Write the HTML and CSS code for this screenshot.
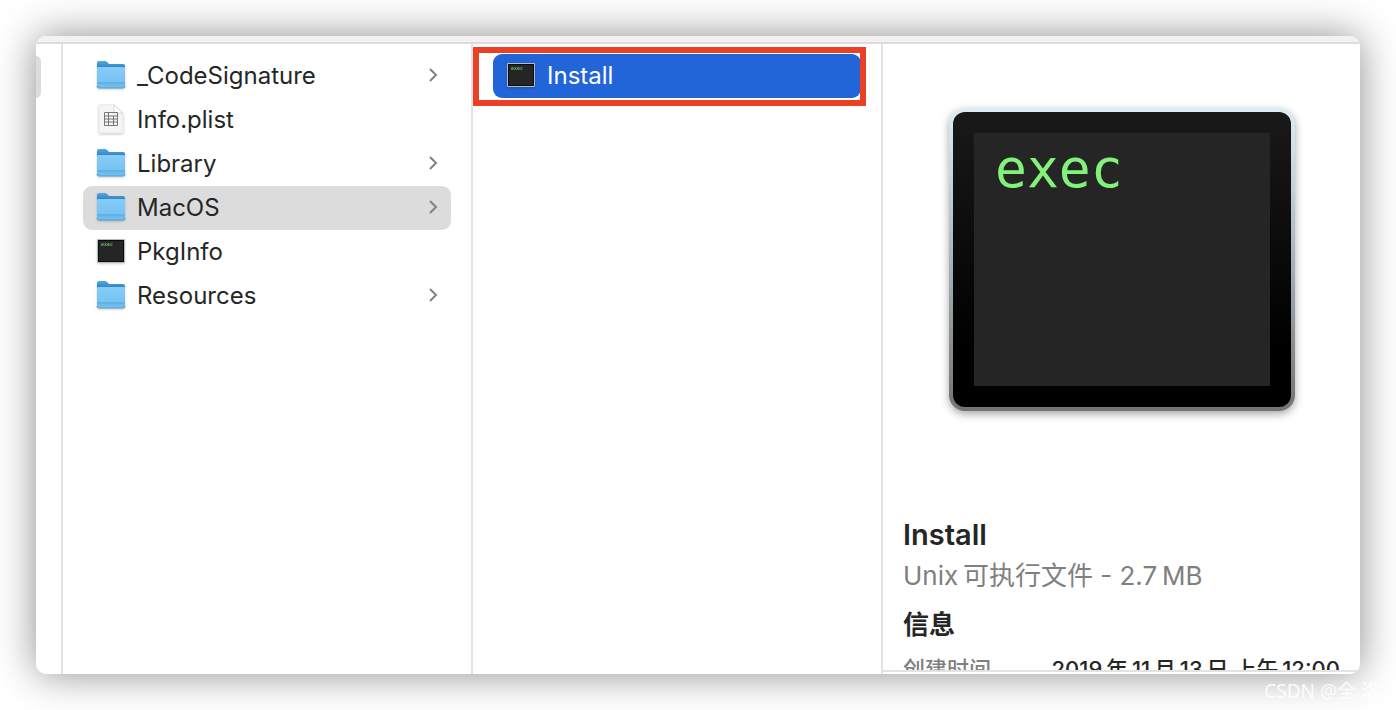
FILE: index.html
```
<!DOCTYPE html>
<html lang="zh-CN">
<head>
  <meta charset="UTF-8" />
  <meta name="viewport" content="width=device-width, initial-scale=1.0" />
  <title>MacOS</title>
  <link rel="stylesheet" href="styles.css">
</head>
<body>
  <svg class="defs" width="0" height="0" aria-hidden="true">
    <defs>
      <linearGradient id="folderBack" x1="0" y1="0" x2="0" y2="1">
        <stop offset="0" stop-color="#52a9df" />
        <stop offset="0.25" stop-color="#2f83c3" />
        <stop offset="1" stop-color="#4b9fd8" />
      </linearGradient>
      <linearGradient id="folderFront" x1="0" y1="0" x2="0" y2="1">
        <stop offset="0" stop-color="#85cdf9" />
        <stop offset="1" stop-color="#73bff0" />
      </linearGradient>
      <linearGradient id="rim" x1="0" y1="0" x2="0" y2="1">
        <stop offset="0" stop-color="#dcedf5" />
        <stop offset="0.3" stop-color="#bccdd5" />
        <stop offset="1" stop-color="#757272" />
      </linearGradient>
      <linearGradient id="bezel" x1="0" y1="0" x2="0" y2="1">
        <stop offset="0" stop-color="#191919" />
        <stop offset="0.8" stop-color="#000" />
      </linearGradient>
    </defs>
    <symbol id="folder" viewBox="0 0 30 30">
      <path d="M1 27V3q0-2 2-2h6q1 0 2 1l2 2h14q2 0 2 2v21z" fill="url(#folderBack)" />
      <path d="M1 8q0-1 1-1h26q1 0 1 1v18q0 2-2 2H3q-2 0-2-2z" fill="url(#folderFront)" />
      <path d="M1 23h28" stroke="#4ba4df" />
      <path d="M1 25h28" stroke="#61b4e8" stroke-width="1" />
      <path d="M1 26q0 2 2 2h24q2 0 2-2" fill="none" stroke="#579bc7" />
    </symbol>
    <symbol id="plist" viewBox="0 0 30 30">
      <path d="M4 1h14l9 9v18q0 1-1 1H4q-1 0-1-1V2q0-1 1-1z" fill="#f5f5f5" stroke="#e9e9e9" />
      <path d="M18 1v7q0 1 1 1h8z" fill="#fff" stroke="#d8d8d8" />
      <path d="M8.500 8.500h13v13h-13zM8.500 12h13M8.500 15h13M8.500 18h13M12.500 8.500v13M17.500 12v9" fill="none" stroke="#777" />
    </symbol>
    <symbol id="exec" viewBox="0 0 30 30">
      <rect x="1" y="3" width="28" height="24" rx="1" fill="#b3bdc1" />
      <rect x="2" y="4" width="26" height="22" fill="#0c0c0c" />
      <rect x="3" y="5" width="24" height="20" fill="#252525" />
      <text class="exec-small" x="5" y="10">exec</text>
    </symbol>
    <symbol id="chevron" viewBox="0 0 10 16">
      <path d="M2 2l6 6-6 6" fill="none" stroke="#828282" stroke-width="2" />
    </symbol>
  </svg>

  <main class="window">
    <div class="toolbar"></div>
    <div class="columns">
      <div class="column parent"><div class="parent-row"></div></div>

      <ul class="column">
        <li><button class="item"><svg class="icon"><use href="#folder" /></svg><span>_CodeSignature</span><svg class="chevron"><use href="#chevron" /></svg></button></li>
        <li><button class="item"><svg class="icon"><use href="#plist" /></svg><span>Info.plist</span></button></li>
        <li><button class="item"><svg class="icon"><use href="#folder" /></svg><span>Library</span><svg class="chevron"><use href="#chevron" /></svg></button></li>
        <li><button class="item open"><svg class="icon"><use href="#folder" /></svg><span>MacOS</span><svg class="chevron"><use href="#chevron" /></svg></button></li>
        <li><button class="item"><svg class="icon"><use href="#exec" /></svg><span>PkgInfo</span></button></li>
        <li><button class="item"><svg class="icon"><use href="#folder" /></svg><span>Resources</span><svg class="chevron"><use href="#chevron" /></svg></button></li>
      </ul>

      <ul class="column marked">
        <li><button class="item selected"><svg class="icon"><use href="#exec" /></svg><span>Install</span></button></li>
      </ul>

      <section class="preview">
        <div class="preview-body">
          <svg class="preview-icon" viewBox="0 0 346 303" role="img" aria-label="exec">
            <rect width="346" height="303" rx="16" fill="url(#rim)" />
            <rect x="4" y="4" width="338" height="295" rx="12" fill="url(#bezel)" />
            <rect x="25" y="25" width="296" height="253" fill="#252525" />
            <text class="exec-big" x="46" y="79">exec</text>
          </svg>
          <h1>Install</h1>
          <p class="kind">Unix&thinsp;可执行文件 - 2.7&thinsp;MB</p>
          <h2>信息</h2>
          <dl class="info">
            <dt>创建时间</dt>
            <dd>2019&thinsp;年&thinsp;11&thinsp;月&thinsp;13&thinsp;日 上午&thinsp;12:00</dd>
          </dl>
        </div>
      </section>
    </div>
  </main>
  <div class="watermark">CSDN @全 洛</div>
</body>
</html>
```
FILE: styles.css
```
* { box-sizing: border-box; margin: 0; padding: 0; }
body { height: 100vh; padding: 36px; background: #fff; color: #262626; font-family: Inter, "Noto Sans CJK SC", sans-serif; overflow: hidden; }
.defs { position: absolute; }

.window { display: flex; flex-direction: column; height: 100%; background: #fff; border-radius: 10px; overflow: hidden; box-shadow: 0 0 40px rgba(0, 0, 0, 0.45); }
.toolbar { height: 8px; flex: none; background: #f4f2f1; border-bottom: 2px solid #dcdcdc; }
.columns { flex: 1; min-height: 0; display: grid; grid-template-columns: 27px 410px 410px 1fr; }
.column { padding: 10px 20px; border-right: 2px solid #e3e3e3; list-style: none; }
.parent { padding: 12px 0; }
.parent-row { width: 5px; height: 42px; background: #dcdcdc; border-radius: 0 6px 6px 0; }

.item { display: flex; align-items: center; gap: 11px; width: 100%; height: 44px; padding: 0 13px 2px; border: 0; border-radius: 9px; background: none; color: #262626; font: 24px Inter, sans-serif; text-align: left; }
.item.open { background: #dcdcdc; }
.item.selected { background: #2265d9; color: #fff; }
.icon { width: 30px; height: 30px; filter: drop-shadow(0 1px 1px rgba(0, 0, 0, 0.2)); }
.chevron { width: 10px; height: 16px; margin-left: auto; }
.exec-small { font: bold 5px "DejaVu Sans Mono", monospace; fill: #62bd62; }

/* red frame round the selected file */
.marked { position: relative; }
.marked::after { content: ""; position: absolute; top: 3px; left: 0; right: 15px; height: 47px; border: 6px solid #ea4025; }

.preview { display: flex; flex-direction: column; min-width: 0; min-height: 0; padding-bottom: 2px; }
.preview-body { flex: 1; min-height: 0; padding: 64px 20px 0; overflow: hidden; border-bottom: 2px solid #e3e3e3; }
.preview-icon { display: block; width: 346px; margin: 0 auto 104px; overflow: visible; filter: drop-shadow(0 3px 4px rgba(0, 0, 0, 0.35)); }
.exec-big { font: 53px "DejaVu Sans Mono", monospace; fill: #83f27b; }
h1 { font-size: 29px; line-height: 40px; font-weight: 600; }
.kind { font-size: 26px; line-height: 42px; color: #808080; }
h2 { margin-top: 4px; font-size: 26px; line-height: 48px; font-weight: 700; }
.info { display: flex; justify-content: space-between; margin-top: 4px; font-size: 22px; line-height: 32px; font-weight: 500; white-space: nowrap; }
.info dt { color: #808080; }

.watermark { position: absolute; right: 16px; bottom: 6px; color: rgba(255, 255, 255, 0.85); font: 19px/26px "Noto Sans", "Noto Sans CJK SC", sans-serif; }
```
